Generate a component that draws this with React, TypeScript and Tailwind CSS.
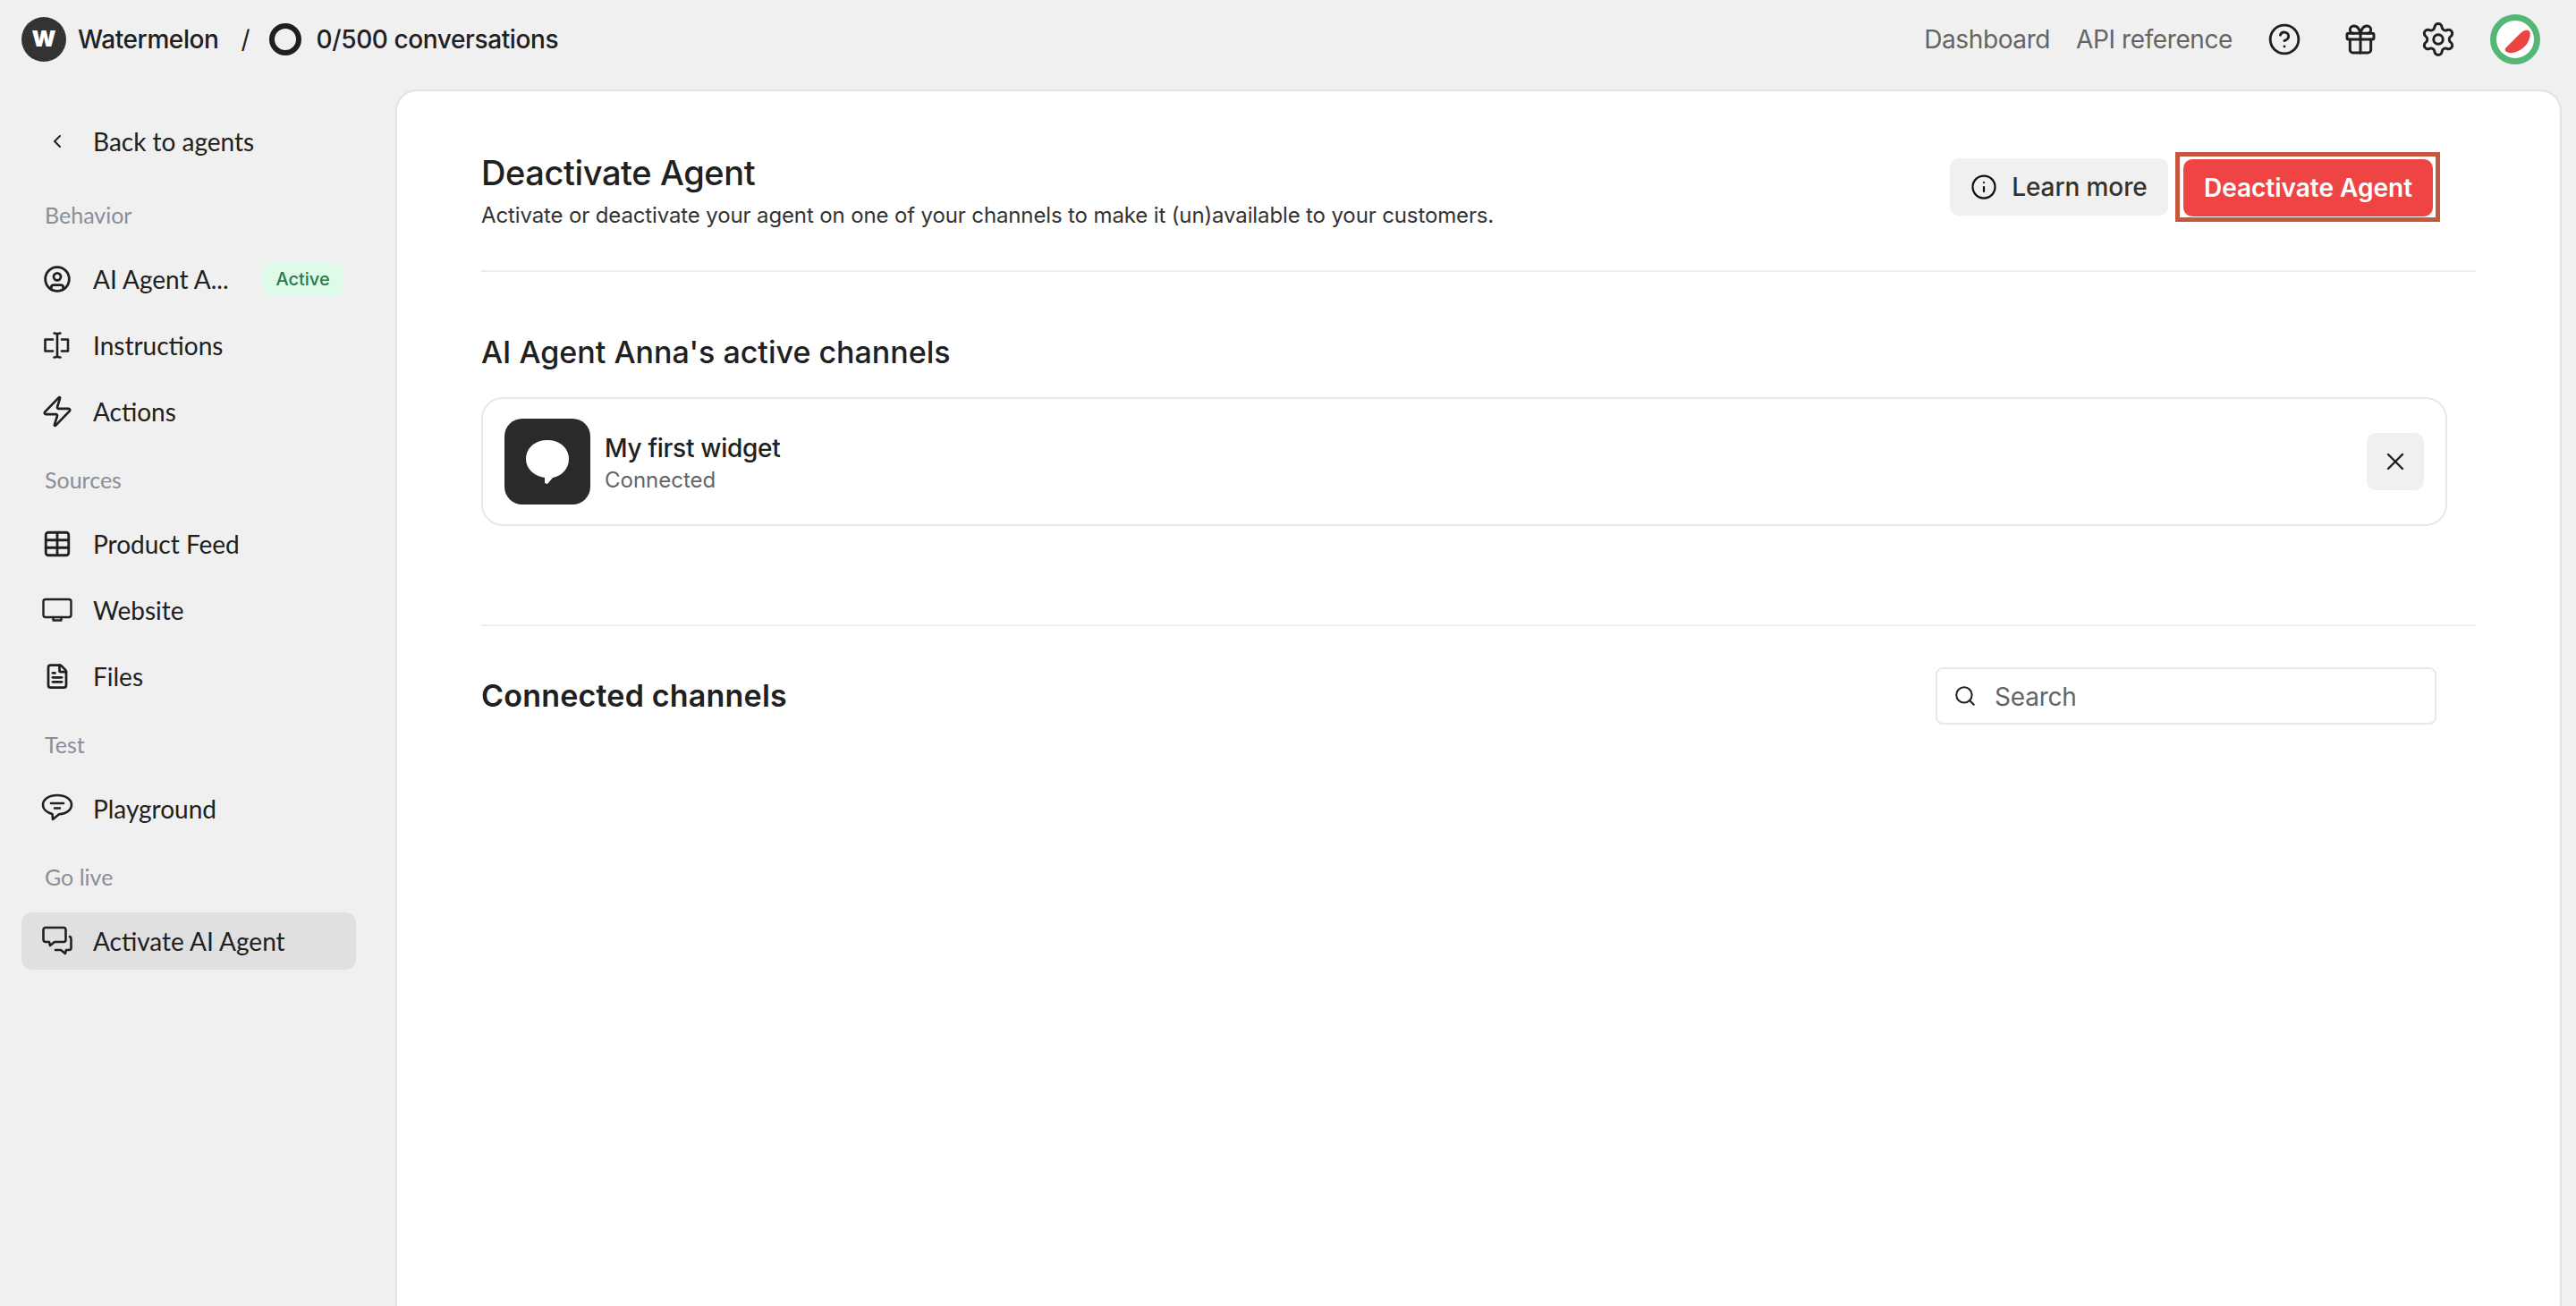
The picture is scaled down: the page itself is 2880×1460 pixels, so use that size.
import { ReactNode } from "react";
import { ChevronLeft, CircleUser, Zap, Table, FileText, CircleHelp, Gift, Settings, Info, X, Search } from "lucide-react";

const InstructionsIcon = () => (
  <svg viewBox="0 0 32 32" className="w-8 h-8" fill="none" stroke="currentColor" strokeWidth="2.6" strokeLinecap="round" strokeLinejoin="round">
    <path d="M11 9.500H2.500v13H11" />
    <path d="M21 9.500h7v13h-7" />
    <path d="M16 4.500v23M12.500 2.500c2 0 3.500 .5 3.500 2 0-1.500 1.500-2 3.500-2M12.500 29.500c2 0 3.500-.5 3.500-2 0 1.500 1.500 2 3.500 2" />
  </svg>
);

const MonitorIcon = () => (
  <svg viewBox="0 0 36 36" className="w-9 h-9" fill="none" stroke="currentColor" strokeWidth="2.400" strokeLinecap="round" strokeLinejoin="round">
    <rect x="2.500" y="6" width="31" height="20" rx="2.500" />
    <path d="M13.500 26v3.500h9V26" />
  </svg>
);

const PlaygroundIcon = () => (
  <svg viewBox="0 0 36 36" className="w-9 h-9" fill="none" stroke="currentColor" strokeWidth="2.600" strokeLinecap="round" strokeLinejoin="round">
    <path d="M18 3C9 3 2 7.500 2 13.500c0 5 4.500 9 10.500 10.500l.5 6 7-5.700C28 24 34 19.500 34 13.500 34 7.500 27 3 18 3Z" />
    <path d="M11 12h14M15 17.500h6" />
  </svg>
);

const ChatsIcon = () => (
  <svg viewBox="0 0 36 36" className="w-9 h-9" fill="none" stroke="currentColor" strokeWidth="2.600" strokeLinecap="round" strokeLinejoin="round">
    <path d="M5 3h20a2.500 2.500 0 0 1 2.500 2.500v11a2.500 2.500 0 0 1-2.500 2.500H15l-5 4-1-4H5a2.500 2.500 0 0 1-2.500-2.500v-11A2.500 2.500 0 0 1 5 3Z" />
    <path d="M32 13c1 .5 1.500 1.500 1.500 2.500v10c0 1.500-1 2.500-2.500 2.500h-3l-1 4-5-4h-6" />
  </svg>
);

const WidgetIcon = () => (
  <svg viewBox="0 0 96 96" className="w-24 h-24">
    <rect width="96" height="96" rx="20" fill="#2a2a2a" />
    <path d="M48 24c14 0 24 9 24 21 0 11-8 19-18 21l-6 7-3-1v-6c-12-2-21-10-21-21 0-12 10-21 24-21Z" fill="#fff" />
  </svg>
);

const Avatar = () => (
  <svg viewBox="0 0 56 56" className="w-14 h-14">
    <circle cx="28" cy="28" r="24.500" fill="#fff" stroke="#55b776" strokeWidth="7" />
    <path d="M19.500 42.500c-2.500-1-3.500-2.500-2.500-4.500L34 21c3-3 6-4 8.500-3 3 1 2.500 5 1.500 9-2.500 8-9 13-15 15-4 1.500-7 1.500-9.500.5Z" fill="#ea4444" />
  </svg>
);

const NavLabel = ({ children }: { children: ReactNode }) => (
  <p className="pl-[26px] h-[70px] mt-[2px] mb-[4px] flex items-center text-[25px] text-[#8b8d98]">{children}</p>
);

const NavItem = ({ icon, label, active, badge }: { icon: ReactNode; label: string; active?: boolean; badge?: boolean }) => (
  <div className={`flex items-center h-[64px] mb-[10px] rounded-xl text-[#202020] ${active ? "bg-[#e0e0e0]" : ""}`}>
    <div className="w-[80px] flex justify-center items-center shrink-0">{icon}</div>
    <span className="text-[28px] leading-none">{label}</span>
    {badge && (
      <span className="ml-[38px] h-[38px] w-[90px] flex items-center justify-center rounded-[10px] bg-[#defbe9] text-[#2b7a4b] text-[20px] font-['Inter',sans-serif] font-medium">
        Active
      </span>
    )}
  </div>
);

export default function App() {
  return (
    <div className="w-full h-[1460px] overflow-hidden flex flex-col bg-[#f0f0f0] font-['Inter',sans-serif] text-[#202020]">
      {/* Top bar */}
      <header className="h-[100px] shrink-0 flex pl-6 pr-10 pb-3 items-center">
        <div className="w-[50px] h-[50px] rounded-full bg-[#333333] text-white flex items-center justify-center text-[25px] font-black">W</div>
        <span className="ml-[13px] text-[28px] font-medium tracking-[-0.4px]">Watermelon</span>
        <span className="ml-[25px] text-[28px]">/</span>
        <div className="ml-[21px] w-9 h-9 rounded-full border-[6px] border-[#1f1f1f]" />
        <span className="ml-[17px] text-[28px] font-medium tracking-[-0.4px]">0/500 conversations</span>
        <nav className="ml-auto flex items-center text-[28px] text-[#646464] tracking-[-0.4px]">
          <span>Dashboard</span>
          <span className="ml-[29px]">API reference</span>
        </nav>
        <CircleHelp className="ml-[39px] w-[38px] h-[38px]" strokeWidth={1.8} />
        <Gift className="ml-[46px] w-10 h-10" strokeWidth={1.8} />
        <Settings className="ml-[46px] w-[42px] h-[42px]" strokeWidth={1.7} />
        <div className="ml-[37px]"><Avatar /></div>
      </header>

      <div className="flex-1 flex min-h-0">
        {/* Sidebar */}
        <aside className="w-[442px] shrink-0 pl-6 pr-[44px] font-['Lato',sans-serif]">
          <div className="flex items-center h-[64px] mt-[26px] mb-[16px]">
            <div className="w-[80px] flex justify-center shrink-0"><ChevronLeft className="w-6 h-6" strokeWidth={2} /></div>
            <span className="text-[28px] leading-none">Back to agents</span>
          </div>
          <NavLabel>Behavior</NavLabel>
          <NavItem icon={<CircleUser className="w-8 h-8" strokeWidth={2.1} />} label="AI Agent A..." badge />
          <NavItem icon={<InstructionsIcon />} label="Instructions" />
          <NavItem icon={<Zap className="w-[38px] h-[38px]" strokeWidth={1.7} />} label="Actions" />
          <NavLabel>Sources</NavLabel>
          <NavItem icon={<Table className="w-[34px] h-[34px]" strokeWidth={2} />} label="Product Feed" />
          <NavItem icon={<MonitorIcon />} label="Website" />
          <NavItem icon={<FileText className="w-[30px] h-[30px]" strokeWidth={2.2} />} label="Files" />
          <NavLabel>Test</NavLabel>
          <NavItem icon={<PlaygroundIcon />} label="Playground" />
          <NavLabel>Go live</NavLabel>
          <NavItem icon={<ChatsIcon />} label="Activate AI Agent" active />
        </aside>

        {/* Main card */}
        <main className="flex-1 mr-4 bg-white rounded-t-3xl border-t-2 border-l-2 border-r-2 border-[#e3e3e3] pl-[94px] pr-[94px]">
          <div className="flex items-center justify-between h-[202px] border-b-2 border-[#eeeeee] pt-[14px]">
            <div className="mt-[10px]">
              <h1 className="text-[38px] font-medium leading-[44px] tracking-[-0.4px]">Deactivate Agent</h1>
              <p className="text-[24px] leading-[32px] mt-[10px] text-[#333333] tracking-[-0.13px]">
                Activate or deactivate your agent on one of your channels to make it (un)available to your customers.
              </p>
            </div>
            <div className="flex items-center mr-10">
              <button className="w-[244px] h-16 rounded-[10px] bg-[#f0f0f0] flex items-center justify-center gap-[16px] text-[28px] font-medium text-[#333333] tracking-[-0.1px]">
                <Info className="w-[30px] h-[30px] text-[#111111]" strokeWidth={1.8} />
                Learn more
              </button>
              <div className="ml-2 border-[5px] border-[#c5593f] pl-[4px] pr-[3px] pt-[3px] pb-[1px]">
                <button className="block w-[279px] h-16 rounded-[10px] bg-[#ef4444] text-white text-[28px] font-semibold">Deactivate Agent</button>
              </div>
            </div>
          </div>

          <h2 className="mt-[64px] text-[34px] font-medium leading-[52px]">AI Agent Anna's active channels</h2>
          <div className="mt-[24px] mr-[32px] h-[144px] flex items-center rounded-3xl border-2 border-[#e8e8e8] pl-6 pr-6">
            <WidgetIcon />
            <div className="ml-4 pt-[3px]">
              <p className="text-[28px] font-medium leading-[38px] tracking-[-0.3px]">My first widget</p>
              <p className="text-[24px] leading-[34px] text-[#646464]">Connected</p>
            </div>
            <button className="ml-auto w-16 h-16 rounded-[10px] bg-[#f0f0f0] flex items-center justify-center">
              <X className="w-8 h-8" strokeWidth={1.8} />
            </button>
          </div>

          <div className="mt-[110px] border-t-2 border-[#eeeeee] flex items-center justify-between pt-[46px] pr-[44px]">
            <h2 className="text-[34px] font-semibold leading-[62px] tracking-[0.2px]">Connected channels</h2>
            <div className="w-[560px] h-[64px] rounded-lg border-2 border-[#e8e8e8] flex items-center pl-[18px] text-[28px] text-[#646464] tracking-[-0.2px]">
              <Search className="w-[26px] h-[26px] text-[#202020]" strokeWidth={1.9} />
              <span className="ml-[20px] pt-[2px]">Search</span>
            </div>
          </div>
        </main>
      </div>
    </div>
  );
}
